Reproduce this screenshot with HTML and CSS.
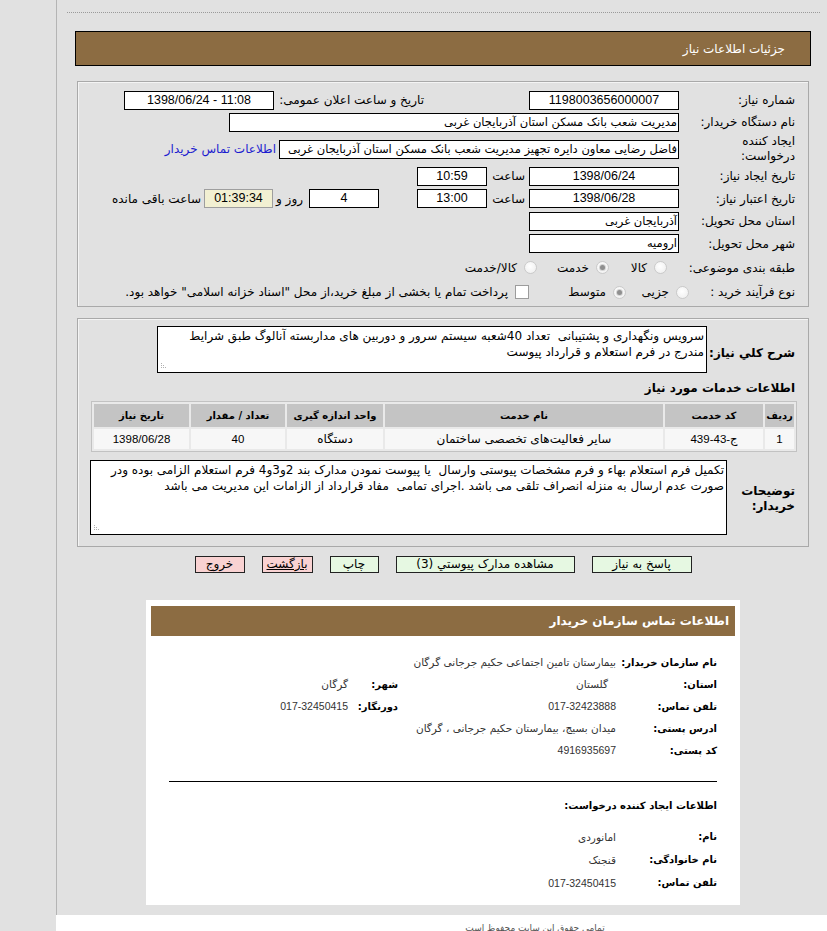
FILE: index.html
```
<!DOCTYPE html>
<html lang="fa" dir="rtl">
<head>
<meta charset="utf-8">
<title>جزئیات اطلاعات نیاز</title>
<link rel="stylesheet" href="styles.css">
</head>
<body>
<div class="main">
  <div class="dots"></div>
  <div class="hdr">جزئیات اطلاعات نیاز</div>

  <div class="panel p1">
    <div class="row h22">
      <div class="lbl">شماره نیاز:</div>
      <div class="box w150 c">1198003656000007</div>
      <div class="lbl2">تاریخ و ساعت اعلان عمومی:</div>
      <div class="box w150 c" dir="ltr">1398/06/24 - 11:08</div>
    </div>
    <div class="row h22">
      <div class="lbl">نام دستگاه خریدار:</div>
      <div class="box w450">مدیریت شعب بانک مسکن استان آذربایجان غربی</div>
    </div>
    <div class="row h32">
      <div class="lbl two">ایجاد کننده<br>درخواست:</div>
      <div class="box w400">فاضل رضایی معاون دایره تجهیز مدیریت شعب بانک مسکن استان آذربایجان غربی</div>
      <a class="link" href="#">اطلاعات تماس خریدار</a>
    </div>
    <div class="row h22">
      <div class="lbl">تاریخ ایجاد نیاز:</div>
      <div class="box w150 c">1398/06/24</div>
      <div class="sa">ساعت</div>
      <div class="box w70 c">10:59</div>
    </div>
    <div class="row h23">
      <div class="lbl">تاریخ اعتبار نیاز:</div>
      <div class="box w150 c">1398/06/28</div>
      <div class="sa">ساعت</div>
      <div class="box w70 c">13:00</div>
      <div class="box w70 c gap38">4</div>
      <div class="rz">روز و</div>
      <div class="box time c">01:39:34</div>
      <div class="rem">ساعت باقی مانده</div>
    </div>
    <div class="row h22">
      <div class="lbl">استان محل تحویل:</div>
      <div class="box w150">آذربایجان غربی</div>
    </div>
    <div class="row h23">
      <div class="lbl">شهر محل تحویل:</div>
      <div class="box w150">ارومیه</div>
    </div>
    <div class="row h25">
      <div class="lbl">طبقه بندی موضوعی:</div>
      <div class="opt o81"><span class="radio"></span><span>کالا</span></div>
      <div class="opt o82"><span class="radio on"></span><span>خدمت</span></div>
      <div class="opt"><span class="radio"></span><span>کالا/خدمت</span></div>
    </div>
    <div class="row h24">
      <div class="lbl short">نوع فرآیند خرید :</div>
      <div class="opt o91"><span class="radio"></span><span>جزیی</span></div>
      <div class="opt o92"><span class="radio on"></span><span>متوسط</span></div>
      <div class="opt"><span class="check"></span><span>پرداخت تمام یا بخشی از مبلغ خرید،از محل "اسناد خزانه اسلامی" خواهد بود.</span></div>
    </div>
  </div>

  <div class="panel p2">
    <div class="row">
      <div class="blbl w88">شرح کلي نياز:</div>
      <div class="area a1">سرویس ونگهداری و پشتیبانی&nbsp; تعداد 40شعبه سیستم سرور و دوربین های مداربسته آنالوگ طبق شرایط مندرج در فرم استعلام و قرارداد پیوست</div>
    </div>
    <div class="title">اطلاعات خدمات مورد نیاز</div>
    <table class="grid">
      <thead>
        <tr>
          <th class="c1">ردیف</th>
          <th class="c2">کد خدمت</th>
          <th class="c3">نام خدمت</th>
          <th class="c4">واحد اندازه گیری</th>
          <th class="c5">تعداد / مقدار</th>
          <th class="c6">تاریخ نیاز</th>
        </tr>
      </thead>
      <tbody>
        <tr>
          <td class="n">1</td>
          <td class="n">ج-43-439</td>
          <td>سایر فعالیت‌های تخصصی ساختمان</td>
          <td>دستگاه</td>
          <td class="n">40</td>
          <td class="n">1398/06/28</td>
        </tr>
      </tbody>
    </table>
    <div class="row r-desc">
      <div class="blbl w68">توضیحات<br>خریدار:</div>
      <div class="area a2">تکمیل فرم استعلام بهاء و فرم مشخصات پیوستی وارسال&nbsp; یا پیوست نمودن مدارک بند 2و3و4 فرم استعلام الزامی بوده ودر صورت عدم ارسال به منزله انصراف تلقی می باشد .اجرای تمامی&nbsp; مفاد قرارداد از الزامات این مدیریت می باشد</div>
    </div>
  </div>

  <div class="buttons">
    <span class="btn green">پاسخ به نیاز</span>
    <span class="btn green">مشاهده مدارک پیوستي (3)</span>
    <span class="btn green">چاپ</span>
    <span class="btn pink u">بازگشت</span>
    <span class="btn pink">خروج</span>
  </div>

  <div class="contact">
    <div class="chdr">اطلاعات تماس سازمان خریدار</div>
    <div class="cgrid">
      <div class="cl">نام سازمان خریدار:</div>
      <div class="cv span3">بیمارستان تامین اجتماعی حکیم جرجانی گرگان</div>

      <div class="cl">استان:</div>
      <div class="cv ind">گلستان</div>
      <div class="cl">شهر:</div>
      <div class="cv">گرگان</div>

      <div class="cl">تلفن تماس:</div>
      <div class="cv n">017-32423888</div>
      <div class="cl">دورنگار:</div>
      <div class="cv n">017-32450415</div>

      <div class="cl">ادرس پستی:</div>
      <div class="cv span3">میدان بسیج، بیمارستان حکیم جرجانی ، گرگان</div>

      <div class="cl">کد پستی:</div>
      <div class="cv span3 n">4916935697</div>
    </div>
    <div class="chr"></div>
    <div class="ctitle">اطلاعات ایجاد کننده درخواست:</div>
    <div class="cgrid g2">
      <div class="cl">نام:</div>
      <div class="cv span3">امانوردی</div>
      <div class="cl">نام خانوادگی:</div>
      <div class="cv span3">قنجنک</div>
      <div class="cl">تلفن تماس:</div>
      <div class="cv span3 n">017-32450415</div>
    </div>
  </div>
</div>
<div class="footer"><span class="ftext">تمامی حقوق این سایت محفوظ است</span></div>
</body>
</html>
```

FILE: styles.css
```
* { box-sizing: border-box; }

html, body {
  margin: 0;
  padding: 0;
}

body {
  background: #e1e1e1;
  font-family: "DejaVu Sans", sans-serif;
  font-size: 12px;
  color: #000;
  direction: rtl;
}

.main {
  margin-left: 56px;
  border-left: 1px solid #b4b4b4;
  padding: 12px 16px 0 18px;
  height: 915px;
}

.dots {
  border-top: 1px dotted #9a9a9a;
  margin: 0 -9px 0 -8px;
  height: 0;
}

.hdr {
  margin-top: 18px;
  height: 35px;
  background: #8c6c42;
  border: 1px solid #000;
  color: #fff;
  font-size: 12px;
  padding-right: 25px;
  display: flex;
  align-items: center;
}

.panel {
  margin: 0 2px;
  border: 1px solid #a9a9a9;
  box-shadow: inset 1px 1px 0 #f4f4f4;
  padding-right: 13px;
}

.p1 {
  margin-top: 15px;
  height: 226px;
  padding-top: 7px;
}

.p2 {
  margin-top: 11px;
  height: 229px;
  padding-top: 7px;
}

.row {
  display: flex;
  align-items: center;
  white-space: nowrap;
}

.h22 { height: 22px; }
.h23 { height: 23px; }
.h24 { height: 24px; }
.h25 { height: 25px; }
.h32 { height: 32px; }

.lbl {
  width: 116px;
  flex: none;
  text-align: right;
}

.lbl.short { width: 106px; }

.lbl.two {
  line-height: 15px;
  white-space: normal;
}

.lbl2 {
  width: 255px;
  padding-right: 105px;
  flex: none;
}

.box {
  height: 19px;
  border: 1px solid #000;
  background: #fff;
  flex: none;
  line-height: 17px;
  padding: 0 1px;
  overflow: hidden;
  white-space: nowrap;
  text-align: right;
  font-size: 11.5px;
}

.box.c {
  text-align: center;
  font-family: "Liberation Sans", "DejaVu Sans", sans-serif;
  font-size: 12.5px;
}

.w150 { width: 150px; }
.w450 { width: 450px; }
.w400 { width: 400px; }
.w70 { width: 70px; }

.gap38 { margin-right: 38px; }

.time {
  width: 69px;
  background: #f2f0d2;
  border-color: #9e9e9e;
}

.sa {
  width: 42px;
  padding-right: 4px;
  flex: none;
}

.rz {
  width: 36px;
  padding-right: 6px;
  flex: none;
}

.rem { padding-right: 3px; }

.link {
  color: #1c1ccf;
  text-decoration: none;
  margin-right: 3px;
}

.opt {
  display: flex;
  align-items: center;
  gap: 7px;
  flex: none;
}

.o81 { margin-right: 12px; width: 58px; }
.o82 { width: 72px; }
.o91 { width: 63px; }
.o92 { width: 97px; }

.radio {
  width: 13px;
  height: 13px;
  border-radius: 50%;
  border: 1px solid #cacaca;
  background: radial-gradient(circle at 45% 40%, #ffffff 0%, #ececec 100%);
  display: inline-block;
  position: relative;
  flex: none;
}

.radio.on::after {
  content: "";
  position: absolute;
  left: 3px;
  top: 3px;
  width: 5px;
  height: 5px;
  border-radius: 50%;
  background: #8f8f8f;
  box-shadow: 0 0 0 1px #d4d4d4;
}

.check {
  width: 14px;
  height: 14px;
  border: 1px solid #9c9c9c;
  background: #fff;
  display: inline-block;
  flex: none;
}

.blbl {
  font-weight: bold;
  flex: none;
  text-align: right;
  white-space: normal;
}

.w88 { width: 88px; padding-top: 6px; }
.w68 { width: 68px; line-height: 15px; padding-top: 2px; }

.area {
  position: relative;
  background: #fff;
  border: 1px solid #000;
  white-space: normal;
  line-height: 16px;
  padding: 1px 2px 0 18px;
  flex: none;
}

.area::after {
  content: "";
  position: absolute;
  left: 3px;
  bottom: 6px;
  width: 1px;
  height: 1px;
  background: #b0b0b0;
  box-shadow: 0 2px 0 #b0b0b0, 2px 2px 0 #b0b0b0, 0 -2px 0 #b0b0b0, 2px 0 0 #b0b0b0, 4px 2px 0 #b0b0b0;
}

.a1 { width: 550px; height: 47px; }
.a2 { width: 637px; height: 75px; }

.title {
  font-weight: bold;
  margin-top: 8px;
  height: 14px;
  line-height: 14px;
  font-size: 12px;
}

.grid {
  margin-top: 6px;
  margin-right: -2px;
  width: 706px;
  border: 1px solid #c2c2c2;
  border-spacing: 2px;
  background: #e9e9e9;
  table-layout: fixed;
  font-size: 12px;
}

.grid th {
  background: #c4c4c4;
  height: 23px;
  font-weight: bold;
  font-size: 10px;
  white-space: nowrap;
  padding: 0;
  text-align: center;
}

.grid td {
  background: #f7f7f7;
  height: 20px;
  padding: 0;
  text-align: center;
}

.grid td.n {
  font-family: "Liberation Sans", "DejaVu Sans", sans-serif;
  font-size: 11.5px;
}

.grid .c1 { width: 29px; }
.grid .c2 { width: 98px; }
.grid .c3 { width: 278px; }
.grid .c4 { width: 96px; }
.grid .c5 { width: 94px; }
.grid .c6 { width: 95px; }

.r-desc { margin-top: 8px; }

.buttons {
  margin-top: 9px;
  display: flex;
  justify-content: center;
  gap: 17px;
}

.btn {
  height: 17px;
  border: 1px solid #222;
  line-height: 15px;
  text-align: center;
  font-size: 12px;
}

.btn:nth-child(1) { width: 100px; }
.btn:nth-child(2) { width: 179px; }
.btn:nth-child(3) { width: 49px; }
.btn:nth-child(4) { width: 51px; }
.btn:nth-child(5) { width: 50px; }

.green { background: #e6f8e2; }
.pink { background: #f9d2d2; }
.u { text-decoration: underline; }

.contact {
  width: 594px;
  margin: 27px auto 0;
  background: #fff;
  padding: 6px 5px 12px;
  height: 305px;
}

.chdr {
  height: 30px;
  background: #8c6c42;
  color: #fff;
  font-weight: bold;
  font-size: 12px;
  display: flex;
  align-items: center;
  padding-right: 6px;
}

.cgrid {
  display: grid;
  grid-template-columns: 101px 218px 50px 1fr;
  grid-auto-rows: 22px;
  align-items: center;
  margin-top: 15px;
  padding-right: 18px;
  white-space: nowrap;
}

.cgrid.g2 {
  margin-top: 12px;
  grid-auto-rows: 23px;
}

.cl {
  font-weight: bold;
  font-size: 10px;
}

.cv {
  color: #333;
  font-size: 10.5px;
}

.cv.ind { padding-right: 8px; }

.cv.n {
  font-family: "Liberation Sans", "DejaVu Sans", sans-serif;
  font-size: 10.5px;
}

.span3 { grid-column: 2 / -1; }

.chr {
  margin: 20px 18px 0 18px;
  border-top: 1px solid #000;
}

.ctitle {
  margin-top: 17px;
  padding-right: 18px;
  font-weight: bold;
  font-size: 10px;
  height: 14px;
  line-height: 14px;
}

.footer {
  margin-left: 56px;
  background: #fff;
  height: 30px;
  padding: 8px 0 0 187px;
  text-align: center;
  font-size: 9px;
  color: #555;
}
```
